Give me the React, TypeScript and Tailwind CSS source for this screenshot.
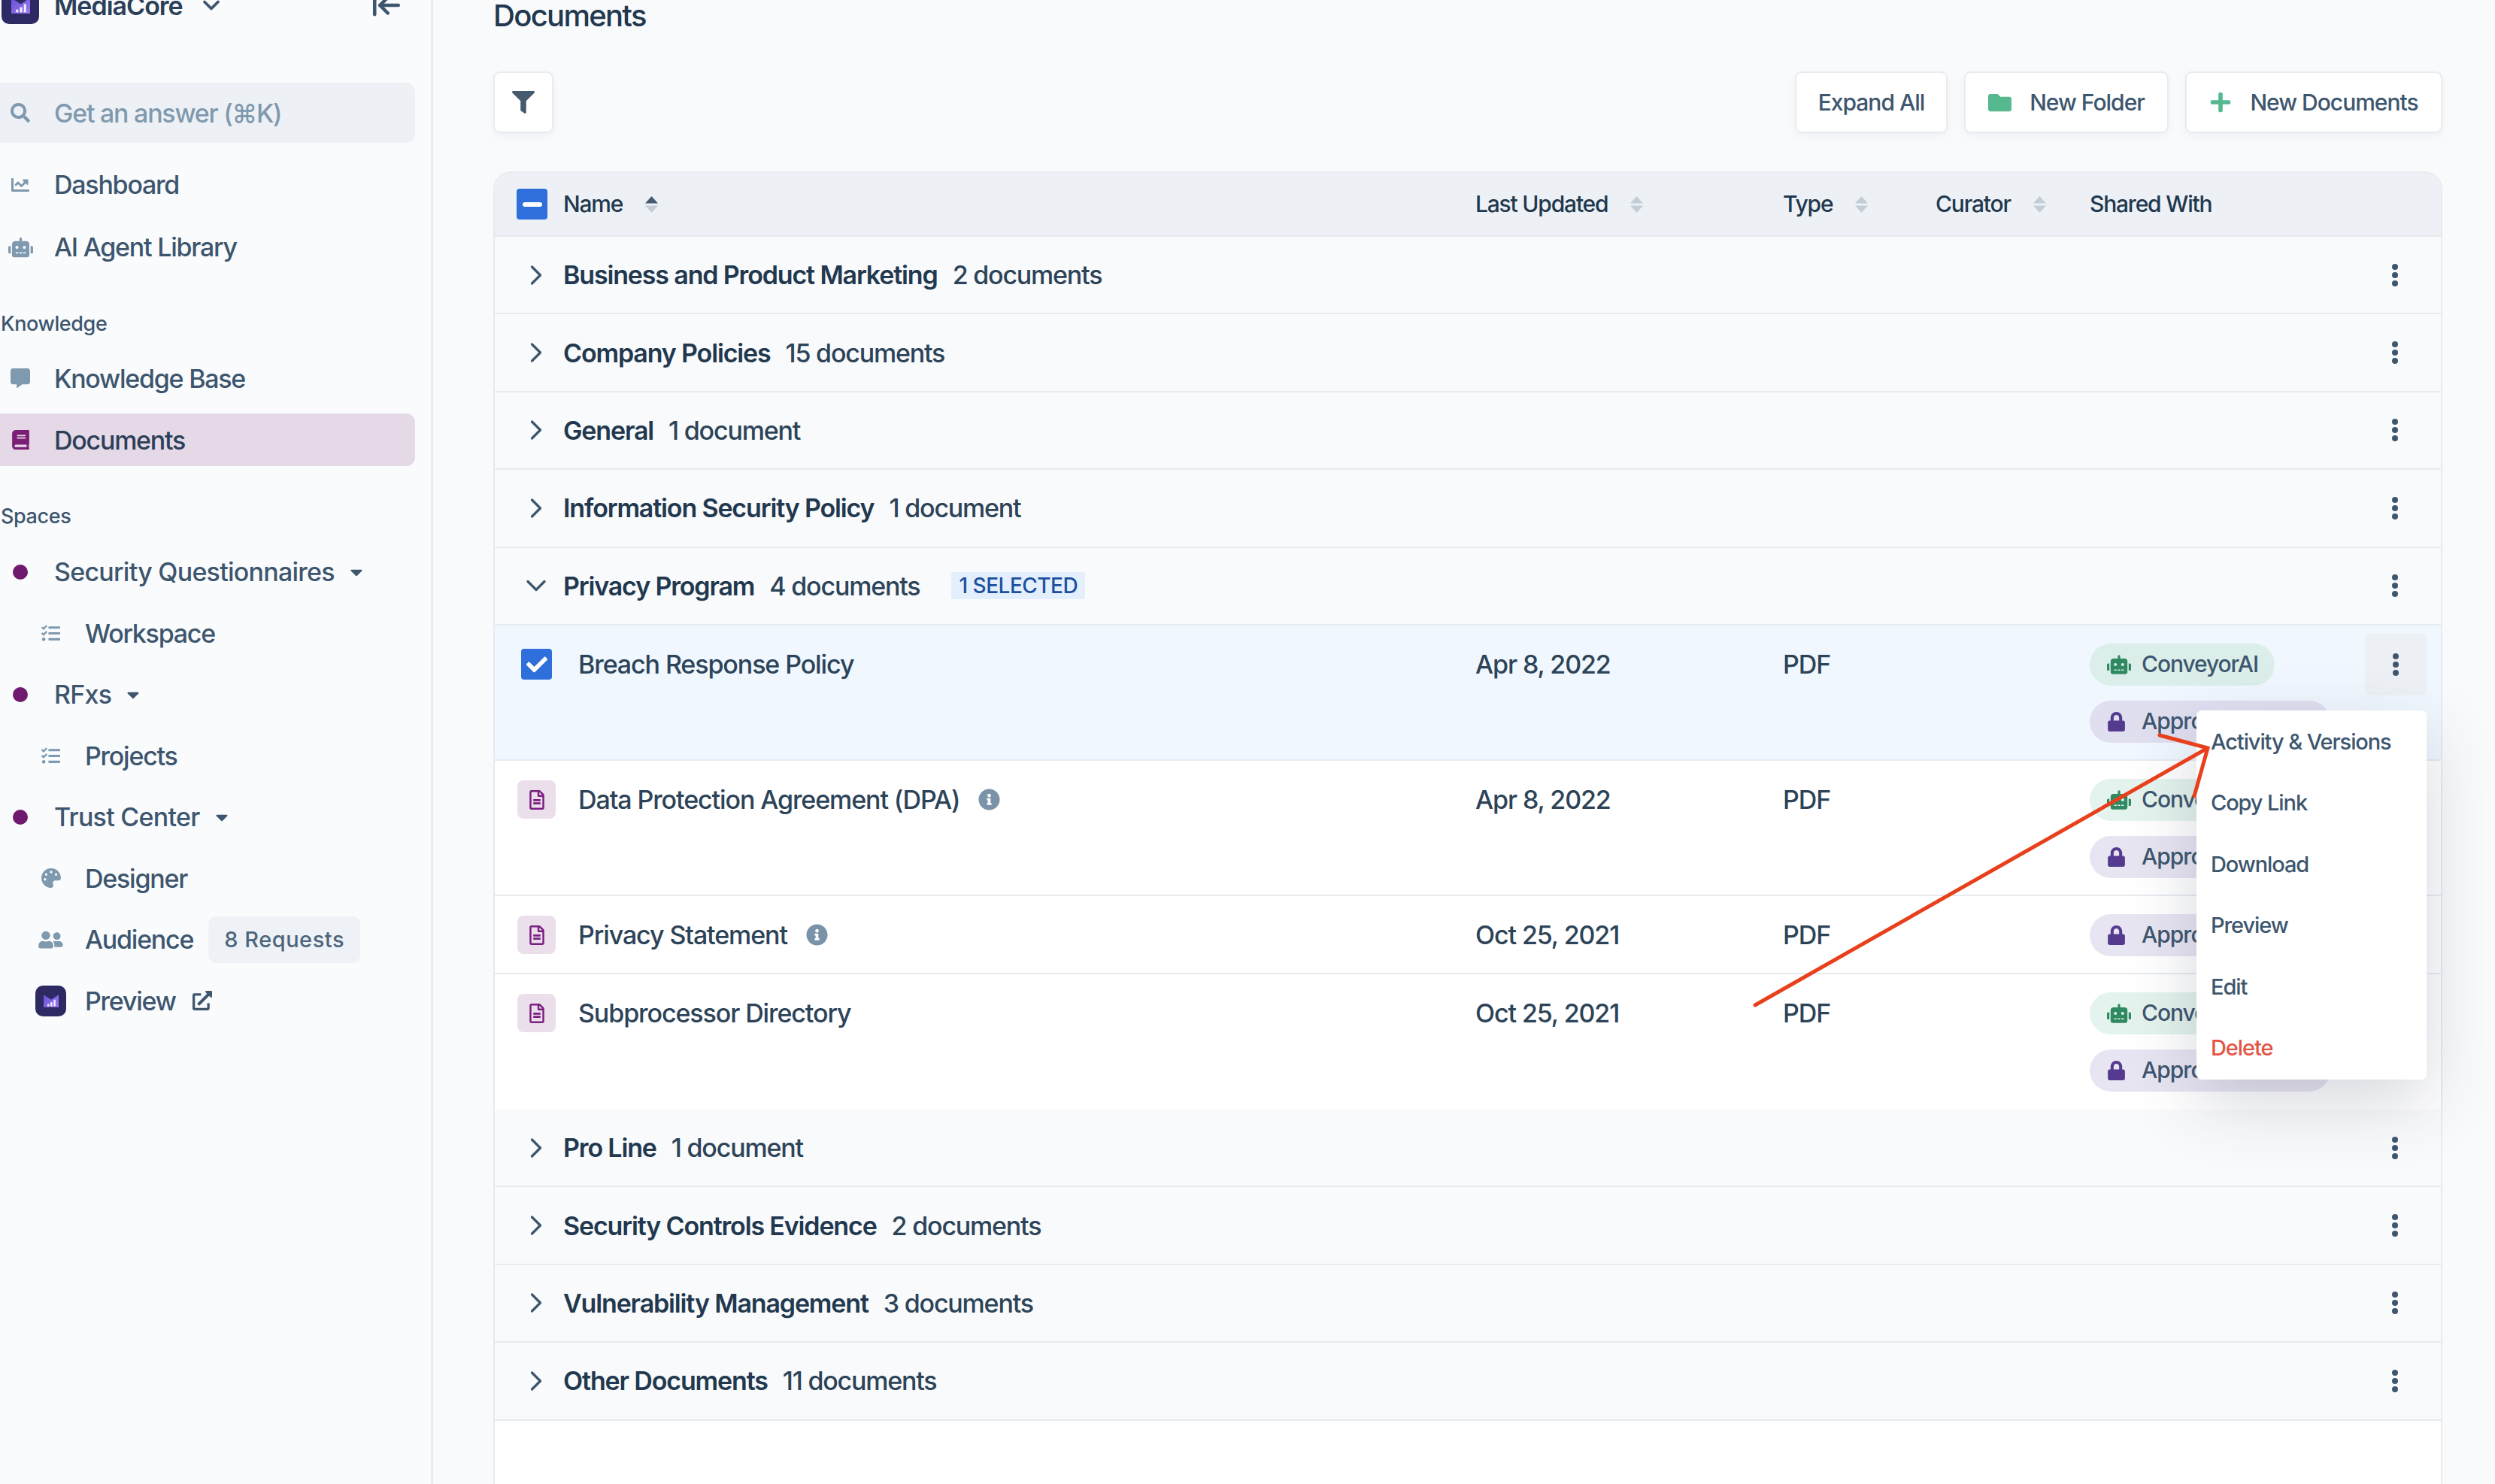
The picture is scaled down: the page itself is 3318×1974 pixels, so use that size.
import { ArrowLeftToLine, ChevronDown, ChevronRight } from "lucide-react";
import type { ReactNode } from "react";
import {
  FaBook,
  FaCaretDown,
  FaChartLine,
  FaCheck,
  FaCommentAlt,
  FaExternalLinkAlt,
  FaFilter,
  FaFolder,
  FaInfoCircle,
  FaLock,
  FaPalette,
  FaPlus,
  FaRegFileAlt,
  FaRobot,
  FaSearch,
  FaTasks,
  FaUserFriends,
} from "react-icons/fa";

const rowGrid = "grid grid-cols-[1304px_409px_203px_205px_366px_1fr]";

function Logo({ size }: { size: "lg" | "sm" }) {
  return (
    <div
      className={`flex shrink-0 items-center justify-center rounded-[10px] bg-[#2d2a63] ${
        size === "lg" ? "h-[50px] w-[50px]" : "h-[41px] w-[41px]"
      }`}
    >
      <svg viewBox="0 0 24 20" className={size === "lg" ? "h-[21px] w-[25px]" : "h-[17px] w-[20px]"}>
        <defs>
          <linearGradient id="logoFill" x1="0" y1="0" x2="1" y2="1">
            <stop offset="0" stopColor="#6a4fd8" />
            <stop offset="1" stopColor="#9a7cf0" />
          </linearGradient>
        </defs>
        <path d="M0 0 L12 8 L24 0 V20 H0 Z" fill="url(#logoFill)" />
        <rect x="6" y="15" width="3" height="3.5" fill="#f0ebff" />
        <rect x="11" y="12" width="3" height="6.5" fill="#f0ebff" />
        <rect x="16" y="8" width="3" height="10.5" fill="#f0ebff" />
      </svg>
    </div>
  );
}

function Kebab() {
  return (
    <svg viewBox="0 0 8 30" className="h-[30px] w-[8px]" fill="#3f566d">
      <circle cx="4" cy="4" r="4" />
      <circle cx="4" cy="15" r="4" />
      <circle cx="4" cy="26" r="4" />
    </svg>
  );
}

function SortIcon({ active }: { active?: boolean }) {
  return (
    <svg viewBox="0 0 17 22" className="h-[22px] w-[17px]">
      <path d="M8.5 0 L17 9.5 H0 Z" fill={active ? "#45596f" : "#c3cdd7"} />
      <path d="M8.5 22 L17 12.5 H0 Z" fill="#c3cdd7" />
    </svg>
  );
}

function NavRow({ icon, children, active }: { icon: ReactNode; children: ReactNode; active?: boolean }) {
  return (
    <div className={`flex h-full items-center text-[34px] tracking-[-1.25px] ${active ? "text-[#2b4058]" : "text-[#3d566e]"}`}>
      <div className="flex w-[72px] shrink-0 items-center justify-center pr-[18px] text-[#7f99ae]">{icon}</div>
      {children}
    </div>
  );
}

function SpaceRow({ name }: { name: string }) {
  return (
    <div className="flex h-[81.5px] items-center text-[34px] tracking-[-0.75px] text-[#3d566e] [font-weight:550]">
      <div className="ml-[17px] h-[20px] w-[20px] rounded-full bg-[#6f1a6e]" />
      <span className="ml-[35px]">{name}</span>
      <FaCaretDown className="ml-[20px] h-[26px] w-[18px] text-[#3d566e]" />
    </div>
  );
}

function SubRow({ icon, children }: { icon: ReactNode; children: ReactNode }) {
  return (
    <div className="flex h-[81.5px] items-center text-[34px] tracking-[-1.25px] text-[#3d566e]">
      <div className="flex w-[113px] shrink-0 items-center justify-center pl-[34px] pr-[12px] text-[#7f99ae]">{icon}</div>
      {children}
    </div>
  );
}

function Sidebar() {
  return (
    <aside className="w-[576px] shrink-0 border-r-[3px] border-[#e8ecf1] bg-[#fafbfd] pr-[21px]">
      <div className="flex h-[110px] items-start">
        <div className="flex h-[14px] w-full items-center pl-[2px]">
          <Logo size="lg" />
          <span className="ml-[20px] text-[34px] font-semibold tracking-[-1px] text-[#2b4058]">MediaCore</span>
          <ChevronDown className="ml-[20px] h-[36px] w-[36px] text-[#3d566e]" strokeWidth={2.5} />
          <ArrowLeftToLine className="ml-auto mr-[17px] h-[42px] w-[42px] text-[#3d566e]" strokeWidth={2.6} />
        </div>
      </div>

      <div className="flex h-[80px] items-center rounded-r-[12px] bg-[#edf1f5] text-[34px] tracking-[-1.25px] text-[#7f99ae]">
        <div className="flex w-[72px] shrink-0 justify-center pr-[18px]">
          <FaSearch className="h-[26px] w-[26px]" />
        </div>
        Get an answer (⌘K)
      </div>

      <div className="mt-[14px] h-[83px]">
        <NavRow icon={<FaChartLine className="h-[24px] w-[26px]" />}>Dashboard</NavRow>
      </div>
      <div className="h-[83px]">
        <NavRow icon={<FaRobot className="h-[28px] w-[33px]" />}>AI Agent Library</NavRow>
      </div>

      <div className="mt-[41px] flex h-[40px] items-center pl-[1px] text-[27px] font-medium tracking-[-0.4px] text-[#3d566e]">Knowledge</div>
      <div className="mt-[11px] h-[82px]">
        <NavRow icon={<FaCommentAlt className="h-[26px] w-[26px]" />}>Knowledge Base</NavRow>
      </div>
      <div className="mt-[6px] h-[70px] rounded-r-[12px] bg-[#e5d9e7]">
        <NavRow active icon={<FaBook className="h-[26px] w-[23px] text-[#7a1f75]" />}>
          Documents
        </NavRow>
      </div>

      <div className="mt-[47px] flex h-[40px] items-center pl-[1px] text-[27px] font-medium tracking-[-0.4px] text-[#3d566e]">Spaces</div>
      <div className="mt-[13px]">
        <SpaceRow name="Security Questionnaires" />
        <SubRow icon={<FaTasks className="h-[25px] w-[27px]" />}>Workspace</SubRow>
        <SpaceRow name="RFxs" />
        <SubRow icon={<FaTasks className="h-[25px] w-[27px]" />}>Projects</SubRow>
        <SpaceRow name="Trust Center" />
        <SubRow icon={<FaPalette className="h-[26px] w-[26px]" />}>Designer</SubRow>
        <SubRow icon={<FaUserFriends className="h-[26px] w-[33px]" />}>
          Audience
          <span className="ml-[20px] flex h-[62px] w-[202px] items-center justify-center rounded-[10px] bg-[#eef2f6] text-[29px] tracking-[0.5px] text-[#4d657c]">
            8 Requests
          </span>
        </SubRow>
        <SubRow icon={<Logo size="sm" />}>
          Preview
          <FaExternalLinkAlt className="ml-[22px] h-[26px] w-[26px] text-[#3d566e]" />
        </SubRow>
      </div>
    </aside>
  );
}

function ToolButton({ icon, children, className }: { icon?: ReactNode; children: ReactNode; className: string }) {
  return (
    <button
      className={`flex h-[82px] items-center justify-center rounded-[9px] border-2 border-[#e8ecf1] bg-white text-[30px] font-medium tracking-[-1px] text-[#3d566e] shadow-[0_4px_10px_rgba(60,80,110,0.06)] ${className}`}
    >
      {icon}
      {children}
    </button>
  );
}

function GroupRow({ name, count, open, badge }: { name: string; count: string; open?: boolean; badge?: boolean }) {
  return (
    <div className="flex h-[103.4px] items-center border-b-2 border-[#e6ebf0] pl-[33px] pr-[20px]">
      {open ? (
        <ChevronDown className="mr-[14px] h-[44px] w-[44px] text-[#3d566e]" strokeWidth={1.8} />
      ) : (
        <ChevronRight className="mr-[14px] h-[44px] w-[44px] text-[#3d566e]" strokeWidth={1.8} />
      )}
      <span className="text-[34px] font-semibold tracking-[-1.15px] text-[#21384e]">{name}</span>
      <span className="ml-[20px] text-[34px] tracking-[-1.2px] text-[#2c4358]">{count}</span>
      {badge && (
        <span className="ml-[42px] flex h-[36px] w-[178px] items-center justify-center rounded-[3px] bg-[#e3effc] text-[28px] font-medium tracking-[-0.5px] text-[#1c4fa0]">
          1 SELECTED
        </span>
      )}
      <div className="ml-auto flex h-[82px] w-[82px] items-center justify-center">
        <Kebab />
      </div>
    </div>
  );
}

function AiPill({ bg }: { bg: string }) {
  return (
    <div className={`flex h-[56px] w-[246px] items-center rounded-full pl-[23px] text-[30px] tracking-[-1.1px] text-[#3d566e] ${bg}`}>
      <FaRobot className="h-[26px] w-[32px] shrink-0 text-[#2f8a62]" />
      <span className="ml-[14px]">ConveyorAI</span>
    </div>
  );
}

function LockPill({ bg }: { bg: string }) {
  return (
    <div className={`flex h-[56px] w-[320px] items-center rounded-full pl-[24px] text-[30px] tracking-[-1px] text-[#3d566e] ${bg}`}>
      <FaLock className="h-[26px] w-[23px] shrink-0 text-[#553b8f]" />
      <span className="ml-[22px]">Approvers</span>
    </div>
  );
}

function DocRow({
  name,
  date,
  info,
  ai,
  selected,
  last,
  children,
}: {
  name: string;
  date: string;
  info?: boolean;
  ai?: boolean;
  selected?: boolean;
  last?: boolean;
  children?: ReactNode;
}) {
  const aiBg = selected ? "bg-[#dbeeea]" : "bg-[#e4f3ed]";
  const lockBg = selected ? "bg-[#e0dff0]" : "bg-[#e8e5f2]";
  return (
    <div
      className={`relative ${rowGrid} items-start border-b-2 pb-[22px] pt-[24px] text-[34px] tracking-[-1.1px] text-[#2c4358] ${
        last ? "border-transparent" : "border-[#e6ebf0]"
      } ${selected ? "bg-[#f0f7fe]" : "bg-white"}`}
    >
      <div className="flex h-[56px] items-center pl-[30px]">
        <div className="flex w-[51px] shrink-0 justify-center">
          {selected ? (
            <div className="flex h-[41px] w-[41px] items-center justify-center rounded-[4px] bg-[#2e6fdb]">
              <FaCheck className="h-[28px] w-[28px] text-white" />
            </div>
          ) : (
            <div className="flex h-[51px] w-[51px] items-center justify-center rounded-[8px] bg-[#ecdfec]">
              <FaRegFileAlt className="h-[26px] w-[20px] text-[#7a1f80]" />
            </div>
          )}
        </div>
        <span className="ml-[30px]">{name}</span>
        {info && <FaInfoCircle className="ml-[25px] h-[29px] w-[29px] text-[#7b93a8]" />}
      </div>
      <div className="flex h-[56px] items-center">{date}</div>
      <div className="flex h-[56px] items-center">PDF</div>
      <div />
      <div className="flex flex-col gap-[20px]">
        {ai && <AiPill bg={aiBg} />}
        <LockPill bg={lockBg} />
      </div>
      <div className="flex">
        <div className={`-my-[13px] flex h-[82px] w-[82px] items-center justify-center rounded-[6px] ${selected ? "bg-[#edf1f5]" : ""}`}>
          {selected && <Kebab />}
        </div>
      </div>
      {children}
    </div>
  );
}

function RowMenu() {
  const items = ["Activity & Versions", "Copy Link", "Download", "Preview", "Edit"];
  return (
    <div className="absolute left-[2263px] top-[113px] z-20 w-[306px] rounded-[7px] bg-white py-px pl-[19px] text-[29px] tracking-[-1.1px] text-[#3d566e] shadow-[0_30px_90px_rgba(50,60,90,0.2)]">
      {items.map((item) => (
        <div key={item} className="flex h-[81.5px] items-center">
          {item}
        </div>
      ))}
      <div className="flex h-[81.5px] items-center text-[#e25545]">Delete</div>
    </div>
  );
}

function HeadCell({ label, sort, active }: { label: string; sort?: boolean; active?: boolean }) {
  return (
    <div className="flex items-center text-[30px] font-medium tracking-[-1.2px] text-[#21384e]">
      {label}
      {sort && (
        <span className="ml-[30px]">
          <SortIcon active={active} />
        </span>
      )}
    </div>
  );
}

export default function App() {
  return (
    <div className="relative flex h-screen overflow-hidden bg-[#f9fafc] [font-family:Inter,sans-serif] [font-weight:450]">
      <Sidebar />
      <main className="flex min-w-0 flex-1 flex-col pl-[80px] pr-[70px]">
        <div className="flex h-[95px] items-start">
          <h1 className="flex h-[42px] items-center text-[40px] font-medium tracking-[-1.7px] text-[#21384e]">Documents</h1>
        </div>
        <div className="flex items-center">
          <button className="flex h-[82px] w-[80px] items-center justify-center rounded-[9px] border-2 border-[#e8ecf1] bg-white shadow-[0_4px_10px_rgba(60,80,110,0.06)]">
            <FaFilter className="h-[30px] w-[30px] text-[#45596f]" />
          </button>
          <div className="ml-auto flex gap-[22px]">
            <ToolButton className="w-[203px]">Expand All</ToolButton>
            <ToolButton className="w-[272px]" icon={<FaFolder className="mr-[24px] h-[31px] w-[31px] text-[#55b88f]" />}>
              New Folder
            </ToolButton>
            <ToolButton className="w-[342px]" icon={<FaPlus className="mr-[24px] h-[30px] w-[30px] text-[#55b88f]" />}>
              New Documents
            </ToolButton>
          </div>
        </div>

        <div className="mt-[51px] flex-1 rounded-t-[24px] border-x-2 border-t-2 border-[#e6ebf0] bg-[#fefefe]">
          <div className={`${rowGrid} h-[85px] items-center rounded-t-[22px] border-b-2 border-[#e3e8ee] bg-[#edf1f5]`}>
            <div className="flex items-center pl-[29px]">
              <div className="flex h-[41px] w-[41px] items-center justify-center rounded-[4px] bg-[#2e6fdb]">
                <div className="h-[6px] w-[26px] rounded-full bg-white" />
              </div>
              <span className="ml-[21px]">
                <HeadCell label="Name" sort active />
              </span>
            </div>
            <HeadCell label="Last Updated" sort />
            <HeadCell label="Type" sort />
            <HeadCell label="Curator" sort />
            <HeadCell label="Shared With" />
          </div>

          <div className="bg-[#f9fafc]">
            <GroupRow name="Business and Product Marketing" count="2 documents" />
            <GroupRow name="Company Policies" count="15 documents" />
            <GroupRow name="General" count="1 document" />
            <GroupRow name="Information Security Policy" count="1 document" />
            <GroupRow name="Privacy Program" count="4 documents" open badge />
          </div>

          <DocRow name="Breach Response Policy" date="Apr 8, 2022" ai selected>
            <RowMenu />
          </DocRow>
          <DocRow name="Data Protection Agreement (DPA)" date="Apr 8, 2022" info ai />
          <DocRow name="Privacy Statement" date="Oct 25, 2021" info />
          <DocRow name="Subprocessor Directory" date="Oct 25, 2021" ai last />

          <div className="bg-[#f9fafc]">
            <GroupRow name="Pro Line" count="1 document" />
            <GroupRow name="Security Controls Evidence" count="2 documents" />
            <GroupRow name="Vulnerability Management" count="3 documents" />
            <GroupRow name="Other Documents" count="11 documents" />
          </div>
        </div>
      </main>

      {/* annotation arrow on top of the screenshot */}
      <svg
        viewBox="2320 960 640 400"
        className="pointer-events-none absolute left-[2320px] top-[960px] z-30 h-[400px] w-[640px]"
        fill="none"
        stroke="#e8401c"
        strokeWidth="5"
        strokeLinecap="round"
      >
        <path d="M2334 1337 L2936 995 M2872 978 L2936 995 L2918 1059" />
      </svg>
    </div>
  );
}
